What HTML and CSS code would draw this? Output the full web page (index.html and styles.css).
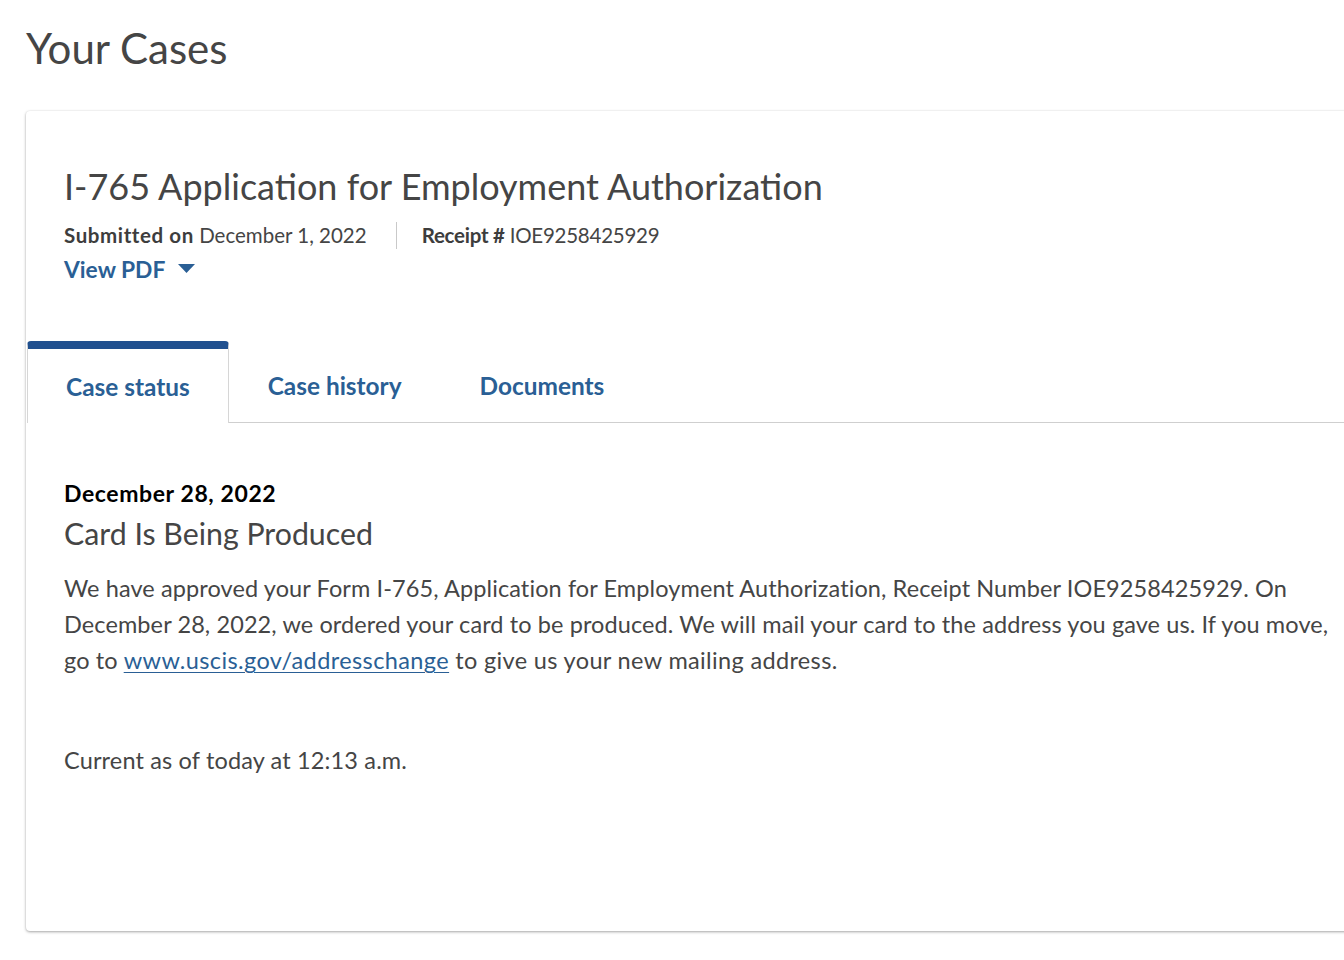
FILE: index.html
```html
<!DOCTYPE html>
<html lang="en">
<head>
<meta charset="utf-8">
<title>Your Cases</title>
<link rel="stylesheet" href="styles.css">
</head>
<body>
<main class="page">
  <h1 class="page-title">Your Cases</h1>
  <section class="case-card">
    <header class="case-header">
      <h2 class="case-title">I-765 Application for Employment Authorization</h2>
      <div class="case-meta">
        <span class="meta-item"><strong class="meta-label-wide">Submitted on</strong> December 1, 2022</span>
        <span class="meta-sep"></span>
        <span class="meta-item meta-receipt"><strong>Receipt #</strong> IOE9258425929</span>
      </div>
      <button class="view-pdf" type="button">View PDF
        <svg class="caret" width="17" height="9" viewBox="0 0 17 9" aria-hidden="true"><path d="M0 0 H17 L8.5 9 Z" fill="currentColor"/></svg>
      </button>
    </header>
    <nav class="tabs">
      <a class="tab tab-active" href="#">Case status</a>
      <a class="tab" href="#">Case history</a>
      <a class="tab" href="#">Documents</a>
      <span class="tab-rest"></span>
    </nav>
    <div class="tab-panel">
      <div class="status-date">December 28, 2022</div>
      <h3 class="status-title">Card Is Being Produced</h3>
      <p class="status-text">We have approved your Form I-765, Application for Employment Authorization, Receipt Number IOE9258425929. On<br>December 28, 2022, we ordered your card to be produced. We will mail your card to the address you gave us. If you move,<br>go to <a href="#" class="text-link">www.uscis.gov/addresschange</a> <span class="line-tail">to give us your new mailing address.</span></p>
      <p class="status-current">Current as of today at 12:13 a.m.</p>
    </div>
  </section>
</main>
</body>
</html>
```

FILE: styles.css
```css
html, body {
  margin: 0;
  padding: 0;
  background: #ffffff;
  overflow: hidden;
}
body {
  font-family: Lato, "Open Sans", sans-serif;
  color: #454545;
  width: 1344px;
  height: 960px;
}
.page {
  padding: 20px 0 0 26px;
}
.page-title {
  margin: 0;
  font-size: 42px;
  font-weight: 400;
  line-height: 56px;
  color: #454545;
}
.case-card {
  margin-top: 35px;
  width: 1400px;
  height: 820px;
  background: #fff;
  border-radius: 4px;
  box-shadow: 0 1px 3px rgba(0,0,0,0.35), 0 0 2px rgba(0,0,0,0.06);
  box-sizing: border-box;
}
.case-header {
  padding: 53px 38px 0 38px;
}
.case-title {
  margin: 0;
  font-size: 36px;
  font-weight: 400;
  line-height: 44px;
  color: #454545;
}
.case-meta {
  display: flex;
  align-items: center;
  margin-top: 13px;
  font-size: 20.5px;
  line-height: 28px;
  color: #454545;
}
.case-meta strong {
  font-weight: 700;
  color: #3d3d3d;
}
.meta-label-wide {
  letter-spacing: 0.6px;
}
.meta-receipt {
  letter-spacing: -0.25px;
}
.meta-sep {
  width: 1px;
  height: 27px;
  background: #c9c9c9;
  margin: 0 25px 0 29px;
}
.view-pdf {
  display: flex;
  align-items: center;
  gap: 13px;
  margin-top: 6px;
  padding: 0;
  border: 0;
  background: none;
  font-family: inherit;
  font-size: 22.8px;
  font-weight: 700;
  line-height: 28px;
  color: #2a5f95;
  cursor: pointer;
}
.caret {
  margin-top: -2px;
}
.tabs {
  display: flex;
  align-items: stretch;
  margin-top: 58px;
  height: 82px;
}
.tab {
  display: flex;
  align-items: center;
  box-sizing: border-box;
  padding: 8px 39px 0 39px;
  font-size: 24.4px;
  font-weight: 700;
  color: #2a5f95;
  text-decoration: none;
  border-bottom: 1px solid #cfcfcf;
}
.tab-active {
  margin-left: 1px;
  padding: 0 38px 0 38px;
  border-top: 8px solid #20508f;
  border-left: 1px solid #d6d6d6;
  border-right: 1px solid #d6d6d6;
  border-bottom: 0;
  border-radius: 4px 4px 0 0;
}
.tab-rest {
  flex: 1;
  border-bottom: 1px solid #cfcfcf;
}
.tab-panel {
  padding: 54px 38px 0 38px;
}
.status-date {
  font-size: 23px;
  font-weight: 700;
  letter-spacing: 0.6px;
  line-height: 32px;
  color: #000;
}
.status-title {
  margin: 5px 0 0 0;
  font-size: 30.3px;
  font-weight: 400;
  line-height: 38px;
  color: #454545;
}
.status-text {
  margin: 18px 0 0 0;
  font-size: 23.5px;
  letter-spacing: 0.1px;
  line-height: 36px;
  white-space: nowrap;
  color: #454545;
}
.text-link {
  color: #2a5f95;
  text-decoration: underline;
  text-decoration-thickness: 1px;
  text-underline-offset: 3px;
  letter-spacing: 0.4px;
}
.line-tail {
  letter-spacing: 0.35px;
}
.status-current {
  margin: 64px 0 0 0;
  font-size: 23.5px;
  letter-spacing: 0.15px;
  line-height: 36px;
  color: #454545;
}
```
